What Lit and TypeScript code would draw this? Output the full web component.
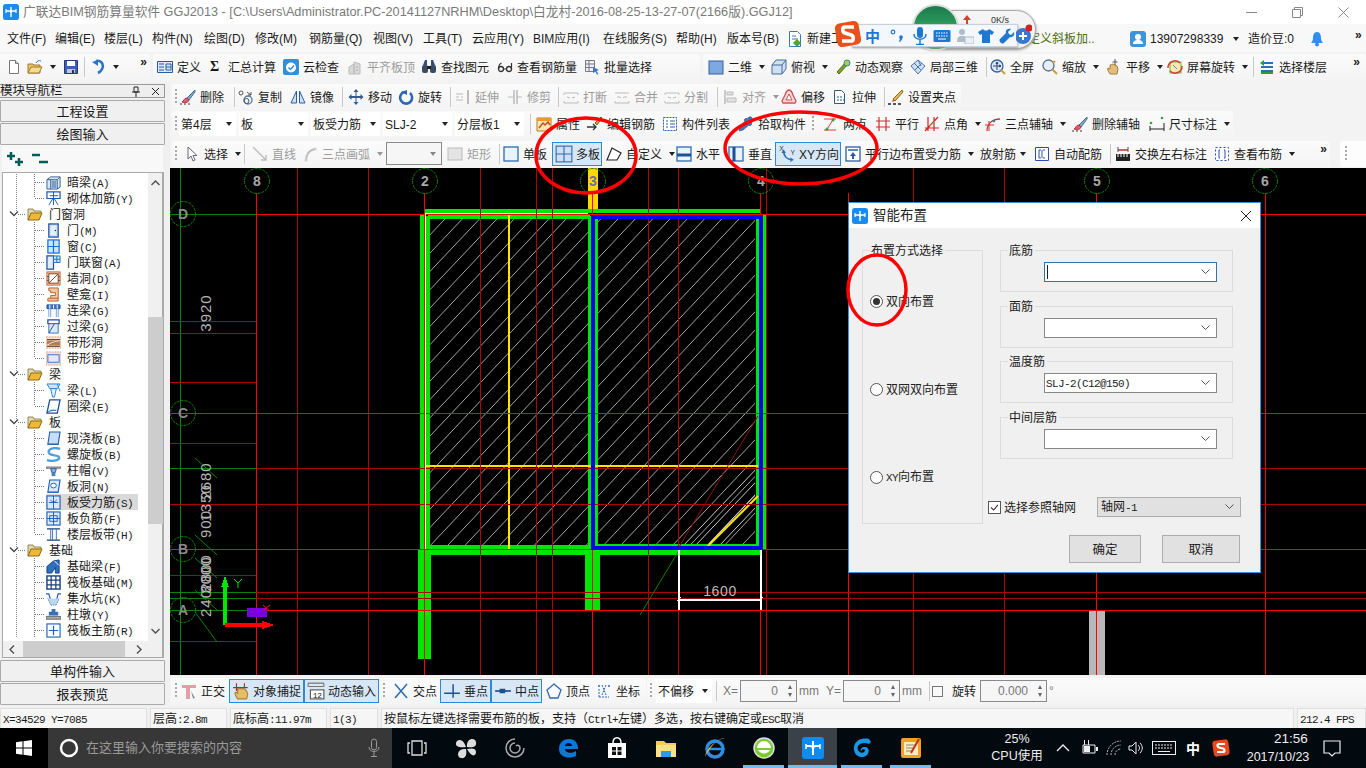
import {LitElement, html, svg, css} from 'lit';
import {customElement} from 'lit/decorators.js';

type Item = {k?: string; ic?: string; t?: string; w: number; f?: string; v?: string};

const it = (ic: string, t: string, w: number, f = ''): Item => ({ic, t, w, f});
const sep = (w: number): Item => ({k: 'sep', w});
const gap = (w: number): Item => ({k: 'gap', w});
const grip = (w = 8): Item => ({k: 'grip', w});
const sel = (t: string, w: number): Item => ({k: 'sel', t, w});
const lbl = (t: string, w: number): Item => ({k: 'lbl', t, w});
const spin = (v: string, w: number): Item => ({k: 'spin', v, w});

const TITLE = '广联达BIM钢筋算量软件 GGJ2013 - [C:\\Users\\Administrator.PC-20141127NRHM\\Desktop\\白龙村-2016-08-25-13-27-07(2166版).GGJ12]';

const MENU: [string, number][] = [['文件(F)', 48], ['编辑(E)', 49], ['楼层(L)', 48], ['构件(N)', 52], ['绘图(D)', 51], ['修改(M)', 54], ['钢筋量(Q)', 64], ['视图(V)', 50], ['工具(T)', 49], ['云应用(Y)', 61], ['BIM应用(I)', 70], ['在线服务(S)', 73], ['帮助(H)', 51], ['版本号(B)', 60]];

const ICONS: Record<string, any> = {
  new: svg`<path d="M3.5 1.5h6l3 3v10h-9z" fill="#fff" stroke="#777"/><path d="M9.5 1.5v3h3" fill="#ddd" stroke="#777"/>`,
  open: svg`<path d="M1 14V5h5l1 1h6v8z" fill="#e8c36a" stroke="#a07c28"/><path d="M1 14l3-6h11l-3 6z" fill="#f5dc94" stroke="#a07c28"/><path d="M9 4c1-2 3-3 5-2" fill="none" stroke="#3a7ac8"/>`,
  save: svg`<path d="M1.5 1.5h13v13h-13z" fill="#3f5fb5" stroke="#223a80"/><path d="M4 2h8v5H4z" fill="#fff"/><path d="M4 10h8v4H4z" fill="#c8c8d4"/><path d="M9 11h2v3H9z" fill="#334"/>`,
  undo: svg`<path d="M6 2C10 1 14 4 12.500 9c-.7 2.300-2.500 4-4.500 5" fill="none" stroke="#2b74c8" stroke-width="2.600"/><path d="M2 3l6-2v6z" fill="#2b74c8"/>`,
  def: svg`<path d="M.5 2.500h15v11H.5z" fill="#dbe7f5" stroke="#2d5a9b"/><path d="M2 5h5M2 8h5M2 11h5M9 5h5v6H9zM9 8h5" fill="none" stroke="#2d5a9b"/>`,
  cloud: svg`<rect x="0" y="0" width="16" height="16" rx="2" fill="#2f8fdc"/><circle cx="8" cy="8.500" r="5" fill="#fff"/><path d="M5.500 8.500l2 2 3.500-4" fill="none" stroke="#2f8fdc" stroke-width="1.500"/>`,
  flat: svg`<path d="M2 15V8l5-3v10zM7 15V3l6 2v10z" fill="#d9d9d9" stroke="#bbb"/><path d="M9 8h2M9 11h2" stroke="#aaa"/>`,
  find: svg`<path d="M2 6l2-5h2v5zM14 6l-2-5h-2v5z" fill="#30507a"/><rect x="1" y="6" width="6" height="8" rx="2" fill="#3a4a60"/><rect x="9" y="6" width="6" height="8" rx="2" fill="#3a4a60"/><path d="M6 7h4v3H6z" fill="#222"/>`,
  see: svg`<circle cx="4" cy="10" r="2.500" fill="none" stroke="#333" stroke-width="1.300"/><circle cx="12" cy="10" r="2.500" fill="none" stroke="#333" stroke-width="1.300"/><path d="M6.500 10h3M1.500 10c0-3 1-5 3-6M14.500 10V4" fill="none" stroke="#333" stroke-width="1.200"/>`,
  batch: svg`<path d="M1.500 1.500h9v11h-9zM1.500 5h9M1.500 8.500h9M5 1.500v11" fill="#eef1f6" stroke="#778"/><path d="M9 8l6 3-2.500 1 2 3-1.500.7-1.500-3L9 14z" fill="#3a78c8"/>`,
  d2: svg`<rect x="1" y="2" width="14" height="13" fill="#7ea8e0" stroke="#35609f"/>`,
  top: svg`<path d="M1 6l4-5h10v9l-4 5H1z" fill="#cfe0f2" stroke="#456a96"/><path d="M1 6h10v9M11 6l4-5" fill="none" stroke="#456a96"/>`,
  orbit: svg`<path d="M2 15l9-10 2 2-9 10z" fill="#7aa32a" stroke="#4c6c12" transform="translate(0 -2)"/><circle cx="12" cy="4" r="3" fill="#a7cf4a" stroke="#3f7fb7"/>`,
  part: svg`<path d="M8 1l7 6-7 8-7-8z" fill="#cfe0f2" stroke="#4a76ac"/><path d="M4 4l7 7M8 1l3 6M12 4L5 11" stroke="#4a76ac" fill="none"/>`,
  full: svg`<circle cx="7" cy="7" r="6" fill="#dbe7f7" stroke="#3a5f9c" stroke-width="1.300"/><path d="M7 3v8M3 7h8M7 3L6 4.500h2zM11 7l-1.500-1v2z" stroke="#27497f" fill="#27497f"/><path d="M11 11l4 4" stroke="#c8a040" stroke-width="2"/>`,
  zoomi: svg`<circle cx="6.500" cy="6.500" r="5.500" fill="#e8eef6" stroke="#5a6f8c" stroke-width="1.300"/><path d="M13 2l-2 2M10.500 10.500l4.500 4.500" stroke="#c8a040" stroke-width="2"/>`,
  pan: svg`<path d="M4 15c-2-3-3-5-2-6l2 1V6l1.500-.5L6 5l1.500.5L9 6l2 1 1 3-1 5z" fill="#e2bd7d" stroke="#a8803c"/><path d="M9 0v6M6.500 3h5" stroke="#556" />`,
  srot: svg`<rect x="3" y="3" width="11" height="11" fill="#ffe9a8" stroke="#6bb04a"/><path d="M1 9a7 7 0 0 1 12-5M15 7a7 7 0 0 1-12 5" fill="none" stroke="#d83a3a" stroke-width="1.500"/><path d="M6 6l4 4" stroke="#3a9ad8"/>`,
  floors: svg`<path d="M2 4h12M2 8h12M2 12h12" stroke="#2d6fb3" stroke-width="2"/><path d="M2 14h12" stroke="#2f9a3f" stroke-width="2"/><path d="M5 1L1 4l4 3z" fill="#2f9a3f"/>`,
  brush: svg`<path d="M15 1L7 9l2 2 6-8z" fill="#7ea8d0" stroke="#47708f"/><path d="M7 9c-3 0-3 3-5 4 3 1 6 1 7-2z" fill="#e05a7a" stroke="#a33"/><path d="M0 15h2M4 15h2M8 15h2" stroke="#333"/>`,
  copy: svg`<path d="M1 4a2 2 0 1 0 4 0 2 2 0 1 0-4 0z" fill="#fff" stroke="#555"/><circle cx="10" cy="11" r="4" fill="none" stroke="#4a78a8" stroke-width="1.300"/><circle cx="8.500" cy="12" r="2.500" fill="none" stroke="#555"/><path d="M9 3l4 3M13 3v3h-3" fill="none" stroke="#555"/>`,
  mirror: svg`<path d="M6.500 2L1 14h5.500zM9.500 2L15 14H9.500z" fill="#cfe0f2" stroke="#2d5f9f"/>`,
  move: svg`<path d="M8 0l2.500 3h-2v4h4V5L15.500 8 12.500 11V9h-4v4h2L8 16l-2.500-3h2V9h-4v2L.5 8 3.500 5v2h4V3h-2z" fill="#2f5a94"/>`,
  rot: svg`<path d="M6 3a6 6 0 1 0 6 1" fill="none" stroke="#2a66b8" stroke-width="2.600"/><path d="M3 3l6-2v5z" fill="#2a66b8"/>`,
  ext: svg`<path d="M1 5h7M1 11h7M1 8h3M6 8h2" stroke="#bbb"/><path d="M13 1v14" stroke="#bbb" stroke-width="2"/>`,
  trim: svg`<path d="M1 8h5M10 8h5" stroke="#bbb"/><path d="M7 1v14M10 1v14" stroke="#bbb" stroke-width="1.500"/>`,
  brk: svg`<path d="M1 4h14M1 14h14M1 4v2M15 4v2M1 12v2M15 12v2" stroke="#bbb"/><path d="M4 8l3 1M12 8l-3 1" stroke="#bbb"/>`,
  mrg: svg`<path d="M1 4h14M1 14h14M1 12v2M15 12v2" stroke="#bbb"/><path d="M3 8h3l1 1M13 8h-3L9 9" fill="none" stroke="#bbb"/>`,
  align: svg`<path d="M3 1v14" stroke="#bbb" stroke-width="1.500"/><path d="M5 3h6v3H5zM5 9h9v4H5z" fill="#e2e2e2" stroke="#bbb"/>`,
  offs: svg`<path d="M8 1c2 0 3 2 4 5l3 6-1 2H2l-1-2 3-6c1-3 2-5 4-5z" fill="#f8d8d8" stroke="#d05050" stroke-width="1.300"/><path d="M8 5l3 6H5z" fill="#fff" stroke="#d05050"/>`,
  stretch: svg`<path d="M2.500 1.500h7l3 3v10h-10z" fill="#fff" stroke="#2d5a80"/><path d="M5 8h5M5 11h7" stroke="#2d5a80" stroke-dasharray="2 1"/>`,
  gpt: svg`<path d="M14 1L5 10l2 2 8-9z" fill="#e8b850" stroke="#8a6a20"/><path d="M0 15h3M5 15h3M10 15h3" stroke="#222" stroke-width="1.500"/><path d="M5 10l-1 3 3-1z" fill="#d05050"/>`,
  attr: svg`<path d="M1 2h14v13H1z" fill="#fbe6b8" stroke="#b87a20"/><path d="M3 12l4-5 2 2 3-3 2 3" fill="none" stroke="#c0501a" stroke-width="1.500"/><path d="M1 2h14v3H1z" fill="#e89a30"/>`,
  edit: svg`<path d="M14 1L8 7l2 2 5-7z" fill="#d8a040" stroke="#806020"/><path d="M0 11h9M6 8l3 3-3 3" fill="none" stroke="#333" stroke-width="1.300"/>`,
  list: svg`<path d="M1.500 1.500h13v13h-13z" fill="#fff" stroke="#2d5f9f" stroke-dasharray="2 1"/><path d="M4 5h2M8 5h5M4 8h2M8 8h5M4 11h2M8 11h5" stroke="#2d5f9f"/>`,
  pick: svg`<path d="M14 2c-1-2-3-1-4 0L9 3 8 2 6 4l1 1-5 6-1 4 4-1 6-5 1 1 2-2-1-1 1-1c1-1 1-2 0-4z" fill="#3f78c0" stroke="#234e8a" stroke-width=".6"/>`,
  twop: svg`<path d="M1 3h12M1 14h12M11 2L3 15" stroke="#d84040" fill="none"/><circle cx="10" cy="4" r="1.500" fill="#3aa03a"/><circle cx="4" cy="13" r="1.500" fill="#3aa03a"/>`,
  para: svg`<path d="M4 1v14M11 1v14M1 5h14M1 11h14" stroke="#d03030" stroke-width="1.200" fill="none"/>`,
  angle: svg`<path d="M4 1v14M10 1v14M1 12h14M1 15L14 1" stroke="#d82020" stroke-width="1.200" fill="none"/><path d="M6 10l5-5" stroke="#2d6" />`,
  arc3: svg`<path d="M2 15C2 8 7 3 15 3" fill="none" stroke="#d03030" stroke-width="1.300"/><path d="M0 9h9M4 5v10" stroke="#d03030"/><circle cx="9" cy="5" r="1.300" fill="#38a"/>`,
  dim: svg`<circle cx="13" cy="2" r="1.300" fill="#3aa03a"/><circle cx="2" cy="7" r="1.300" fill="#3aa03a"/><path d="M1 10v5M15 7v8M1 13h14" stroke="#222" fill="none"/>`,
  arrow: svg`<path d="M4 1v12l3-3 2 5 2-1-2-4.500h4z" fill="#fff" stroke="#667"/>`,
  line: svg`<path d="M1 1l13 13M14 9v5H9" fill="none" stroke="#bbb" stroke-width="1.300"/>`,
  arc: svg`<path d="M4 15C4 8 8 4 13 3" fill="none" stroke="#bbb" stroke-width="2"/><circle cx="13" cy="3" r="1.500" fill="#ccc"/><circle cx="4" cy="14" r="1.500" fill="#ccc"/>`,
  rect: svg`<rect x="1" y="2" width="14" height="12" fill="#e4e4e4" stroke="#bbb"/>`,
  single: svg`<rect x="1" y="1" width="14" height="14" fill="#eaf2fb" stroke="#2d6bb3" stroke-width="1.300"/>`,
  multi: svg`<rect x="1" y="1" width="14" height="14" fill="#cfe0f2" stroke="#2d6bb3" stroke-width="1"/><path d="M8 1v14M1 8h14" stroke="#2d6bb3"/>`,
  custom: svg`<path d="M1 14L6 2l9 5-4 7z" fill="#fff" stroke="#222" stroke-width="1.200"/>`,
  horz: svg`<rect x="1" y="1" width="14" height="14" fill="#eaf2fb" stroke="#2d6bb3" stroke-width="1.300"/><path d="M1 9h14" stroke="#1d4f93" stroke-width="3"/>`,
  vert: svg`<rect x="1" y="1" width="14" height="14" fill="#eaf2fb" stroke="#2d6bb3" stroke-width="1.300"/><path d="M6 1v14" stroke="#1d4f93" stroke-width="3"/>`,
  xy: svg`<path d="M5 5c0 5 3 8 8 8" fill="none" stroke="#2d6bb3" stroke-width="1.500"/><path d="M5 4L3 7h4zM14 13l-3-2v4z" fill="#2d6bb3"/><text x="1" y="5" font-size="6" font-family="Liberation Sans" fill="#333">X</text><text x="11" y="9" font-size="6" font-family="Liberation Sans" fill="#333">Y</text>`,
  edge: svg`<rect x="1" y="1" width="14" height="14" fill="#fff" stroke="#2d5f9f" stroke-width="1.300"/><path d="M3 4h10" stroke="#2d5f9f" stroke-width="1.500"/><path d="M8 6l3 4H9v3H7v-3H5z" fill="#2d5f9f"/>`,
  auto: svg`<path d="M1.500 1.500h13v13h-13z" fill="#fff" stroke="#2d4fa5" stroke-width="1"/><path d="M7 4H5v8h2M9 4h2M9 12h2M8 4v8" fill="none" stroke="#2d4fa5"/>`,
  swap: svg`<path d="M1 8h14v7H1z" fill="#222"/><path d="M3 8v3M6 8v3M9 8v3M12 8v3" stroke="#fff"/><path d="M3 4h10" stroke="#c03030" stroke-width="1.500"/><path d="M3 1v5M13 1v5" stroke="#555"/>`,
  view: svg`<path d="M1.500 1.500h13v13h-13z" fill="#fff" stroke="#2d4fa5" stroke-dasharray="2 2"/><path d="M6 4H5v8h1M10 4h1v8h-1" fill="none" stroke="#2d4fa5"/>`,
  ortho: svg`<path d="M1 2h14v3H9v11H5V5H1z" fill="#e2a0a4"/><path d="M10 8l4 7-2 .5z" fill="#889"/>`,
  snap: svg`<path d="M5 15c-2-3-3-5-2-6l2 1V6h6l2 2 1 3-1 4z" fill="#e4c060" stroke="#a8803c"/><path d="M4 1v7M11 1v4M1 5h13" stroke="#a03030"/>`,
  dyn: svg`<path d="M1 1h14M1 4h14M1 1v3M15 1v3" stroke="#777"/><rect x="3" y="7" width="12" height="8" fill="#fff" stroke="#555"/><text x="5" y="14" font-size="7" font-family="Liberation Mono" fill="#222">12</text>`,
  cross: svg`<path d="M2 1l12 14M14 1L2 15" stroke="#2d6bb3" stroke-width="1.500"/>`,
  perp: svg`<path d="M1 10h14" stroke="#1d4f93" stroke-width="1.300"/><path d="M9 2v12" stroke="#1d4f93" stroke-width="1.300"/>`,
  mid: svg`<path d="M1 8h14" stroke="#1d4f93" stroke-width="1.500"/><rect x="5" y="6" width="5" height="4" fill="#1d4f93"/>`,
  vertex: svg`<path d="M8 1l7 6-3 8H4L1 7z" fill="#f8fbff" stroke="#2d6bb3" stroke-width="1.300"/>`,
  coord: svg`<path d="M3 14V6M3 14h10M6 2l4 10M10 2L6 12" fill="none" stroke="#2d6bb3" stroke-dasharray="2 1"/><circle cx="3" cy="3" r="1" fill="#2d6bb3"/><circle cx="13" cy="3" r="1" fill="#2d6bb3"/>`,
  doc: svg`<path d="M2.500 .5h8l3 3v12h-11z" fill="#fff" stroke="#3a78b8"/><path d="M5 8h6M5 5h4" stroke="#3a78b8"/><path d="M10 8l4 4-4 4-4-4z" fill="#5aa02a"/>`,
  user: svg`<rect width="16" height="16" rx="3" fill="#3f93d8"/><circle cx="8" cy="6" r="3" fill="#fff"/><path d="M3 13c0-3 2-4 5-4s5 1 5 4z" fill="#fff"/>`,
  bell: svg`<path d="M8 1c3 0 4 3 4 6 0 2 1 4 2 5H2c1-1 2-3 2-5 0-3 1-6 4-6z" fill="#2f8ef0"/><circle cx="8" cy="13.500" r="2" fill="#2f8ef0"/>`,
  // tree icons
  tbeam: svg`<path d="M1 5l4-3h10v11l-3 2H1z" fill="#dde8f4" stroke="#35608f"/><path d="M1 5h11v10M12 5l3-3M5 5v10" fill="none" stroke="#35608f"/><path d="M6 6h5v8H6z" fill="#7f9cc0"/>`,
  tmas: svg`<path d="M1 1h14v7H1z" fill="#fff" stroke="#1d58b8" stroke-width="1.300"/><path d="M4 5h9M8 1v14M3 15l5-8 5 8" fill="none" stroke="#1d58b8"/>`,
  tdoor: svg`<rect x="3" y="1" width="10" height="14" fill="#c8daf0" stroke="#1d4f9f" stroke-width="1.300"/><path d="M5 3h6v10H5z" fill="#e6f0fa"/><circle cx="10" cy="8" r=".8" fill="#133"/>`,
  twin: svg`<rect x="2" y="1" width="12" height="14" fill="#cfe2f6" stroke="#1d6fc8" stroke-width="1.300"/><path d="M8 1v14M2 8h12" stroke="#1d6fc8" stroke-width="1.300"/>`,
  tdw: svg`<path d="M1 1h7v14H1z" fill="#e2edf8" stroke="#1d4f9f" stroke-width="1.300"/><path d="M8 1h7v7H8zM11.500 1v7M8 4.500h7" fill="#cfe2f6" stroke="#1d6fc8"/>`,
  thole: svg`<rect x="1" y="1" width="14" height="14" fill="#f8d8c0" stroke="#b85a28"/><rect x="3" y="3" width="10" height="10" fill="#fff" stroke="#704020"/><path d="M3 13L13 3M1 6h2M1 10h2M13 6h2M13 10h2" stroke="#704020"/>`,
  tniche: svg`<path d="M3 1h10v14H2v-3h3V9h5V6H5V4H3z" fill="#f4c8a0" stroke="#b85a28"/><path d="M5 12h8" stroke="#b85a28"/>`,
  tlink: svg`<path d="M1 2h14v4H1z" fill="#3f78c8" stroke="#1d4f9f"/><path d="M4 2v4M8 2v4M12 2v4" stroke="#fff"/><path d="M3 6v9M13 6v9M5 6v9M11 6v9" stroke="#6fa0e0"/>`,
  tover: svg`<path d="M2 1h12v4H2z" fill="#fff" stroke="#1d4f9f" stroke-width="1.300"/><path d="M3 5h10v10H3z" fill="#dbe8f6" stroke="#3a70b8"/><path d="M3 15L9 5" stroke="#1d4f9f"/>`,
  tband: svg`<rect x="0" y="2" width="16" height="12" fill="#f8e0d0" stroke="#e0a080" stroke-dasharray="2 1"/><path d="M1 6h14v5H1z" fill="#b88050"/><path d="M1 11C6 8 10 7 15 6" stroke="#fff"/><path d="M1 5h14M1 12h14" stroke="#402010"/>`,
  twinb: svg`<rect x="0" y="1" width="16" height="14" fill="#f8e0d0" stroke="#e0a080" stroke-dasharray="2 1"/><rect x="2" y="4" width="12" height="8" fill="#dfeaf8" stroke="#3a70c0"/>`,
  tfun: svg`<path d="M1 1h14l-3 5H4z" fill="#cfe4f8" stroke="#2a80c8"/><path d="M5 6h6l-2 9H7z" fill="#e8f2fc" stroke="#2a80c8"/><path d="M12 1l3 8" stroke="#2a80c8"/>`,
  tring: svg`<path d="M4 1h11l-3 14H1z" fill="#fff" stroke="#1d4f9f" stroke-width="1.400"/><path d="M1 15l4-3h6" stroke="#1d4f9f" fill="#bcd"/>`,
  tslab: svg`<path d="M4 1h11l-2 13H2z" fill="#c8dcf4" stroke="#1d5fb0" stroke-width="1.200"/><path d="M2 14h11v1H1z" fill="#1d5fb0"/>`,
  tspiral: svg`<path d="M15 2C8 0 2 2 3 6s10 2 11 5-6 5-13 3" fill="none" stroke="#4fa0e0" stroke-width="2.500"/>`,
  tcap: svg`<path d="M0 4h16v2H0z" fill="#999" stroke="#666" stroke-width=".5"/><path d="M5 6h6l-1 4H6z" fill="#8ab0d8" stroke="#2d5f9f"/><path d="M6 10h4v4H6z" fill="#4a80c0"/>`,
  tsh: svg`<path d="M4 1h11l-2 13H2z" fill="#dbe8f8" stroke="#1d5fb0" stroke-width="1.200"/><ellipse cx="8" cy="7" rx="3" ry="2.500" fill="#fff" stroke="#1d5fb0"/><path d="M2 14h11v1H1z" fill="#1d5fb0"/>`,
  treb: svg`<rect x="1" y="1" width="14" height="14" fill="#dbe8f8" stroke="#1d5fb0" stroke-width="1.200"/><path d="M8 1v14M3 8h10M5 5c0 3 6 3 6 0" fill="none" stroke="#1d5fb0"/>`,
  tneg: svg`<rect x="1" y="1" width="14" height="14" fill="#dbe8f8" stroke="#1d5fb0" stroke-width="1.200"/><path d="M8 1v14M1 8h14M4 5h8v6H4z" fill="none" stroke="#1d5fb0"/>`,
  tfb: svg`<path d="M1 2h14M1 14h14" stroke="#1d3f80" stroke-width="1.500"/><path d="M5 2v12M11 2v12M7 2v12" stroke="#3a70b8"/>`,
  tfnd: svg`<path d="M1 15V8L8 2l6-1v14H10V9L6 15z" fill="#2f6fc0" stroke="#163f80"/><path d="M9 2l5 5" stroke="#fff"/>`,
  traft: svg`<rect x="1" y="1" width="14" height="14" fill="#fff" stroke="#1d3f80" stroke-width="1.500"/><path d="M1 5.500h14M1 10.500h14M5.500 1v14M10.500 1v14" stroke="#1d3f80" stroke-width="1.300"/>`,
  tpit: svg`<path d="M0 3h3l2 7h6l2-7h3" fill="none" stroke="#1d5fb0" stroke-width="1.300"/><path d="M2 8l3 7h6l3-7" fill="#bcd8f0" stroke-dasharray="1 1" stroke="#2d6fb0"/>`,
  tpier: svg`<path d="M6 2h4v3h3v4H3V5h3z" fill="#3a70b8"/><path d="M0 10h16v3H0z" fill="#aaa" stroke="#666"/>`,
  tmain: svg`<rect x="1" y="1" width="14" height="14" fill="#fff" stroke="#1d5fb0" stroke-width="1.200"/><path d="M8 3v10M3 8h10" stroke="#1d5fb0" stroke-width="1.300"/>`,
  tfold: svg`<path d="M1 14V3h5l1 2h7v2" fill="#e4d8a8" stroke="#8a8a60"/><path d="M1 14l3-7h11l-3 7z" fill="#f0b838" stroke="#8a6a10"/>`,
};

const TB1A: Item[] = [gap(6), it('new', '', 21), it('open', '', 36, 'v'), it('save', '', 18), sep(7), gap(2), it('undo', '', 32, 'v')];
const TB1B: Item[] = [it('def', '定义', 53), {k: 'sigma', w: 18}, {k: 'lbl', t: '汇总计算', w: 55}, it('cloud', '云检查', 64), it('flat', '平齐板顶', 74, 'd'), it('find', '查找图元', 76), it('see', '查看钢筋量', 87), it('batch', '批量选择', 70)];
const TB1C: Item[] = [gap(5), it('d2', '二维', 63, 'v'), it('top', '俯视', 64, 'v'), it('orbit', '动态观察', 75), it('part', '局部三维', 72), sep(8), it('full', '全屏', 52), it('zoomi', '缩放', 64, 'v'), it('pan', '平移', 61, 'v'), it('srot', '屏幕旋转', 80, 'v'), sep(12), it('floors', '选择楼层', 70)];
const TB2: Item[] = [grip(), it('brush', '删除', 50), sep(8), it('copy', '复制', 52), it('mirror', '镜像', 47), sep(11), it('move', '移动', 50), it('rot', '旋转', 47), sep(10), it('ext', '延伸', 52, 'd'), it('trim', '修剪', 46, 'd'), sep(10), it('brk', '打断', 51, 'd'), it('mrg', '合并', 50, 'd'), it('brk', '分割', 49, 'd'), sep(9), it('align', '对齐', 59, 'dv'), it('offs', '偏移', 51), it('stretch', '拉伸', 48), sep(8), it('gpt', '设置夹点', 70)];
const TB3A: Item[] = [grip(7), sel('第4层', 57), gap(3), sel('板', 69), gap(3), sel('板受力筋', 69), gap(3), sel('SLJ-2', 69), gap(3), sel('分层板1', 69), sep(12), it('attr', '属性', 51), it('edit', '编辑钢筋', 75), it('list', '构件列表', 76), it('pick', '拾取构件', 66)];
const TB3B: Item[] = [grip(), gap(6), it('twop', '两点', 52), it('para', '平行', 49), it('angle', '点角', 61, 'v'), it('arc3', '三点辅轴', 87, 'v'), it('brush', '删除辅轴', 77), it('dim', '尺寸标注', 84, 'v')];
const TB4: Item[] = [grip(), gap(4), it('arrow', '选择', 56, 'v'), sep(8), gap(4), it('line', '直线', 50, 'd'), it('arc', '三点画弧', 84, 'dv'), {k: 'combo', w: 56}, gap(5), it('rect', '矩形', 48, 'd'), sep(8), it('single', '单板', 49), it('multi', '多板', 50, 'a'), gap(4), it('custom', '自定义', 70, 'v'), it('horz', '水平', 52), it('vert', '垂直', 47), it('xy', 'XY方向', 66, 'a'), gap(4), it('edge', '平行边布置受力筋', 135, 'v'), {k: 'lblv', t: '放射筋', w: 54}, it('auto', '自动配筋', 72), sep(9), it('swap', '交换左右标注', 99), it('view', '查看布筋', 80, 'v')];
const TB5A: Item[] = [grip(9), gap(1), it('ortho', '正交', 48), it('snap', '对象捕捉', 75, 'a'), it('dyn', '动态输入', 75, 'a')];
const TB5B: Item[] = [grip(9), gap(5), it('cross', '交点', 47), it('perp', '垂点', 51, 'a'), it('mid', '中点', 51, 'a'), gap(4), it('vertex', '顶点', 50), it('coord', '坐标', 48)];
const TB5C: Item[] = [grip(8), gap(1), sel('不偏移', 56), sep(9), {k: 'gray', t: 'X=', w: 19}, spin('0', 57), {k: 'gray', t: 'mm', w: 27}, {k: 'gray', t: 'Y=', w: 19}, spin('0', 57), {k: 'gray', t: 'mm', w: 26}, sep(6), {k: 'chk', w: 20}, lbl('旋转', 28), spin('0.000', 67), {k: 'gray', t: '°', w: 10}];

type Row = {t: string; ic?: string; last?: boolean; sel?: boolean};
const TREE: Row[] = [
  {t: '暗梁(A)', ic: 'tbeam'}, {t: '砌体加筋(Y)', ic: 'tmas', last: true},
  {t: '门窗洞'},
  {t: '门(M)', ic: 'tdoor'}, {t: '窗(C)', ic: 'twin'}, {t: '门联窗(A)', ic: 'tdw'}, {t: '墙洞(D)', ic: 'thole'}, {t: '壁龛(I)', ic: 'tniche'}, {t: '连梁(G)', ic: 'tlink'}, {t: '过梁(G)', ic: 'tover'}, {t: '带形洞', ic: 'tband'}, {t: '带形窗', ic: 'twinb', last: true},
  {t: '梁'},
  {t: '梁(L)', ic: 'tfun'}, {t: '圈梁(E)', ic: 'tring', last: true},
  {t: '板'},
  {t: '现浇板(B)', ic: 'tslab'}, {t: '螺旋板(B)', ic: 'tspiral'}, {t: '柱帽(V)', ic: 'tcap'}, {t: '板洞(N)', ic: 'tsh'}, {t: '板受力筋(S)', ic: 'treb', sel: true}, {t: '板负筋(F)', ic: 'tneg'}, {t: '楼层板带(H)', ic: 'tfb', last: true},
  {t: '基础'},
  {t: '基础梁(F)', ic: 'tfnd'}, {t: '筏板基础(M)', ic: 'traft'}, {t: '集水坑(K)', ic: 'tpit'}, {t: '柱墩(Y)', ic: 'tpier'}, {t: '筏板主筋(R)', ic: 'tmain'},
];

const VERT: [number, number][] = [[256, 1], [297, 0], [368, 0], [424, 1], [480, 0], [536, 0], [552, 0], [592, 1], [648, 0], [678, 0], [760, 1], [766, 0], [848, 1], [913, 0], [1004, 0], [1096, 1], [1265, 1]];
// y, colour left of the 8 axis, colour right of it
const HORZ: [number, string, string][] = [[214, 'g', 'b'], [321, 'd', ''], [333, 'd', ''], [382, 'd', ''], [413, 'g', 'b'], [443, 'd', ''], [468, 'g', 'd'], [504, 'd', 'd'], [549, 'g', 'b'], [575, 'd', ''], [592, 'g', 'd'], [598, 'g', 'd'], [610, 'g', 'b'], [641, 'd', '']];
const COL: Record<string, string> = {g: '#0b800b', b: '#f00', d: '#a80808'};
const G = '#00e600';

const mix = (s: string) => s.split(/([\x20-\x7e]+)/).map((p, i) => (i % 2 ? html`<span class="lat">${p}</span>` : p));
const icon = (k: string, s = 16) => html`<svg class="ic" width=${s} height=${s} viewBox="0 0 16 16">${ICONS[k]}</svg>`;
const caret = html`<svg class="chev" width="9" height="6" viewBox="0 0 9 6"><path d="M.5 .5l4 4 4-4" fill="none" stroke="#555"/></svg>`;
const APP = svg`<rect width="16" height="16" rx="2.500" fill="#1a8cf0"/><path d="M8 3v10M3 7h3c1 0 2 .7 2 2M13 7h-3c-1 0-2 .7-2 2" fill="none" stroke="#fff" stroke-width="1.400"/><path d="M3 5v4M13 5v4" stroke="#fff" stroke-width="1.200"/>`;

@customElement('app-root')
export class AppRoot extends LitElement {
  static styles = css`
    :host {
      display: block;
      position: relative;
      width: 1366px;
      height: 768px;
      overflow: hidden;
      background: #f0f0f0;
      font: 12px/16px "Liberation Sans", "Noto Sans CJK SC", sans-serif;
      color: #1a1a1a;
    }
    svg { display: block; flex: none; }
    .lat { font: 11px/16px "Liberation Mono", monospace; letter-spacing: -.6px; }

    .title { height: 24px; background: #fff; display: flex; align-items: center; padding-left: 3px; color: #7a7a7a; font-size: 12.730px; }
    .title .name { margin-left: 4px; white-space: nowrap; flex: 1; }
    .winbtn { width: 46px; height: 22px; display: flex; align-items: center; justify-content: center; }

    .menu { height: 28px; background: #f8f8f8; display: flex; align-items: center; padding-left: 7px; white-space: nowrap; }
    .menu .m { flex: none; display: flex; align-items: center; gap: 4px; padding-top: 1px; box-sizing: border-box; }
    .olive { color: #4d6b10; }
    .more { font: bold 12px/12px "Liberation Sans", sans-serif; align-self: flex-start; margin-top: 5px; }

    .tb1 { height: 30px; padding-top: 2px; box-sizing: border-box; display: flex; background: #f3f3f3; }
    .tbar { display: flex; align-items: center; height: 26px; background: linear-gradient(#fbfbfb, #f4f4f4); border-radius: 3px; white-space: nowrap; flex: none; }
    .it { display: flex; align-items: center; flex: none; box-sizing: border-box; height: 100%; gap: 4px; }
    .it > span:not(.tri) { padding-top: 2px; }
    .it.d { color: #9c9c9c; }
    .it.a { background: #d7e7f6; border: 1px solid #2b8ad8; height: 24px; padding-left: 2px; gap: 3px; }
    .it.a .ic { width: 18px; height: 18px; }
    .tri { width: 0; height: 0; border: 3px solid transparent; border-top: 4px solid #222; border-bottom: 0; margin-left: 3px; flex: none; }
    .it.d .tri { border-top-color: #999; }
    .sepw { flex: none; display: flex; justify-content: center; height: 100%; align-items: center; }
    .sepw i { width: 1px; height: 20px; background: #c8c8c8; }
    .grip { flex: none; display: flex; justify-content: center; align-items: center; height: 100%; }
    .grip i { width: 2px; height: 16px; background: repeating-linear-gradient(#a8a8a8 0 2px, transparent 2px 4px); }
    .sel { flex: none; box-sizing: border-box; height: 24px; background: #fff; display: flex; align-items: center; justify-content: space-between; padding: 0 4px 0 2px; overflow: hidden; }
    .sel span:first-child { padding-top: 2px; }
    .combo { flex: none; box-sizing: border-box; height: 23px; border: 1px solid #8a8a8a; background: #f6f6f6; display: flex; align-items: center; justify-content: flex-end; padding-right: 5px; }
    .spin { flex: none; box-sizing: border-box; height: 22px; border: 1px solid #8a8a8a; background: #f6f6f6; color: #777; display: flex; align-items: center; justify-content: flex-end; }
    .spin b { font-weight: 400; margin-right: 5px; }
    .spin .ud { width: 13px; height: 100%; display: flex; flex-direction: column; justify-content: space-around; align-items: center; padding: 2px 0; box-sizing: border-box; }
    .spin .ud i { width: 0; height: 0; border: 2.500px solid transparent; }
    .spin .ud .u { border-bottom: 4px solid #666; border-top: 0; }
    .spin .ud .n { border-top: 4px solid #666; border-bottom: 0; }
    .gray { color: #777; flex: none; padding-left: 2px; box-sizing: border-box; }
    .chk { flex: none; }
    .chk i { display: block; width: 11px; height: 11px; border: 1px solid #777; box-sizing: border-box; background: #f8f8f8; }

    .main { height: 624px; display: flex; }
    .nav { width: 170px; flex: none; box-sizing: border-box; padding-top: 2px; display: flex; flex-direction: column; }
    .navhead { width: 165px; height: 14px; box-sizing: border-box; border: 1px solid #999; border-width: 1px 1px 1px 0; display: flex; align-items: center; line-height: 12px; font-size: 12.500px; background: #eee; flex: none; }
    .navhead span { flex: 1; }
    .nbtn { width: 165px; height: 22px; box-sizing: border-box; border: 1px solid #aaa; border-radius: 1px; display: flex; align-items: center; justify-content: center; font-size: 13px; flex: none; background: #f0f0f0; padding-top: 2px; }
    .nbtn + .nbtn { margin-top: 1px; }
    .pm { width: 161px; height: 27px; margin-left: 2px; background: #f8f8f8; display: flex; gap: 8px; align-items: center; padding-left: 5px; box-sizing: border-box; flex: none; }
    .treebox { width: 162px; height: 486px; margin-left: 2px; box-sizing: border-box; border: 1px solid #aaa; border-right-width: 2px; background: #f0f0f0; display: flex; flex-direction: column; flex: none; margin-bottom: 2px; }
    .treetop { display: flex; height: 468px; flex: none; }
    .rows { width: 145px; height: 100%; overflow: hidden; background: #fff; flex: none; box-sizing: border-box; padding-top: 1px; }
    .row { height: 16px; position: relative; display: flex; align-items: center; white-space: nowrap; padding-left: 43px; box-sizing: border-box;
      background: repeating-linear-gradient(#888 0 1px, transparent 1px 2px) 13px 0/1px 100% no-repeat; }
    .row::before { content: ""; position: absolute; left: 31px; top: 0; width: 1px; height: 100%; background: repeating-linear-gradient(#777 0 1px, transparent 1px 2px); }
    .row::after { content: ""; position: absolute; left: 32px; top: 8px; width: 10px; height: 1px; background: repeating-linear-gradient(90deg, #777 0 1px, transparent 1px 2px); }
    .row.last::before { height: 8px; }
    .row.p { padding-left: 24px; gap: 4px; z-index: 1; }
    .row.p::before { display: none; }
    .row.p::after { left: 15px; width: 8px; }
    .row span { padding-top: 2px; }
    .row .chv { position: absolute; left: 6px; top: 5px; background: #fff; }
    .row .lab { display: flex; align-items: center; gap: 4px; padding-right: 2px; height: 16px; flex: none; width: 92px; box-sizing: border-box; }
    .row.sel .lab { background: #d9d9d9; }
    .vs { width: 15px; display: flex; flex-direction: column; flex: none; }
    .vs .t1 { height: 124px; flex: none; }
    .vs .th { height: 207px; background: #cdcdcd; flex: none; }
    .ar { display: flex; align-items: center; justify-content: center; flex: none; }
    .hs { height: 16px; display: flex; align-items: center; flex: none; }
    .hs .th { width: 102px; height: 100%; background: #cdcdcd; margin-left: 3px; }
    .hs .ar { width: 17px; }

    .right { flex: 1; display: flex; flex-direction: column; min-width: 0; }
    .rowt { height: 27px; padding-top: 1px; box-sizing: border-box; display: flex; padding-left: 2px; flex: none; align-items: center; background: #f3f3f3; gap: 1px; }
    .rowt.first { height: 28px; padding-top: 2px; }
    .rowt.r4 { height: 31px; padding: 3px 0 1px 2px; }
    .canvas { height: 507px; background: #000; position: relative; flex: none; }
    .rowb { height: 31px; box-sizing: border-box; padding: 3px 0 2px 1px; display: flex; gap: 0; flex: none; background: #f3f3f3; }
    .rowb .tbar { height: 26px; }

    .status { height: 22px; padding-top: 2px; box-sizing: border-box; display: grid; grid-template-columns: 147px 77px 97px 48px 913px 1fr; column-gap: 3px; }
    .status div { background: #f6f6f6; border: 1px solid #e0e0e0; border-bottom: 0; box-sizing: border-box; padding-left: 2px; white-space: nowrap; line-height: 20px; overflow: hidden; }

    .task { height: 40px; background: #020a10; display: flex; color: #fff; align-items: center; position: relative; }
    .start { width: 48px; height: 100%; background: #000; display: flex; align-items: center; justify-content: center; flex: none; }
    .search { width: 344px; height: 100%; background: #373737; flex: none; display: flex; align-items: center; box-sizing: border-box; padding: 0 12px 0 10px; color: #9a9a9a; font-size: 13px; }
    .search span { flex: 1; margin-left: 6px; }
    .tk { width: 49px; height: 100%; flex: none; display: flex; align-items: center; justify-content: center; box-sizing: border-box; position: relative; }
    .tk.run::after { content: ""; position: absolute; left: 4px; right: 4px; bottom: 0; height: 3px; background: #76b9ed; }
    .tk.cur::after { left: 0; right: 0; }
    .tk.cur { background: #3a4148; }
    .tray { flex: none; display: flex; align-items: center; justify-content: center; height: 100%; }
    .cpu { width: 64px; margin-left: 50px; flex-direction: column; font-size: 12.500px; line-height: 17px; color: #eee; }
    .clock { width: 82px; flex-direction: column; line-height: 18px; font-size: 12.500px; text-align: center; color: #eee; }
    .clock span:first-child { margin-left: 26px; font-size: 13.500px; }

    /* dialog floats over the drawing */
    .dlg { position: absolute; left: 678px; top: 34px; width: 413px; height: 371px; box-sizing: border-box; border: 1px solid #3b8fdc; background: #f0f0f0; display: flex; flex-direction: column; color: #222; }
    .dlghead { height: 25px; background: #fff; display: flex; align-items: center; padding-left: 3px; gap: 5px; font-size: 13.500px; flex: none; }
    .dlghead span { flex: 1; }
    .dlghead .x { margin-right: 8px; }
    .dlgbody { position: relative; flex: 1; display: flex; padding: 22px 0 0 13px; align-items: flex-start; }
    .grp { border: 1px solid #dcdcdc; box-sizing: border-box; position: relative; }
    .grp > em { position: absolute; left: 7px; top: -8px; font-style: normal; background: #f0f0f0; padding: 0 2px 0 1px; line-height: 16px; font-size: 12px; }
    .gl { width: 121px; height: 274px; padding: 40px 0 0 7px; display: flex; flex-direction: column; gap: 68px; flex: none; }
    .radio { display: flex; align-items: center; height: 20px; gap: 3px; }
    .radio span { padding-top: 1px; }
    .radio i { width: 13px; height: 13px; border-radius: 50%; border: 1px solid #555; box-sizing: border-box; background: #fff; display: flex; align-items: center; justify-content: center; flex: none; }
    .radio i b { width: 7px; height: 7px; border-radius: 50%; background: #333; }
    .gr { display: flex; flex-direction: column; gap: 13.500px; margin-left: 17px; flex: none; }
    .gr .grp { width: 233px; height: 42px; padding: 11px 0 0 43px; }
    .cb { width: 173px; height: 20px; box-sizing: border-box; border: 1px solid #888; background: #fff; display: flex; align-items: center; justify-content: space-between; padding: 0 6px 0 1px; }
    .cb.focus { border-color: #2f72b0; }
    .cursor { width: 1px; height: 14px; background: #222; margin-left: 1px; }
    .refrow { position: absolute; left: 139px; top: 269px; display: flex; align-items: center; }
    .ck { width: 13px; height: 13px; box-sizing: border-box; border: 1px solid #555; background: #fff; margin-right: 3px; flex: none; }
    .refrow > span, .refcb > span { padding-top: 1px; }
    .refcb { width: 144px; height: 20px; margin-left: 21px; background: #e1e1e1; border: 1px solid #adadad; box-sizing: border-box; display: flex; align-items: center; justify-content: space-between; padding: 0 6px 0 3px; }
    .btns { position: absolute; left: 220px; top: 307px; display: flex; gap: 21px; }
    .bt { height: 28px; background: #e1e1e1; border: 1px solid #adadad; box-sizing: border-box; display: flex; align-items: center; justify-content: center; font-size: 12.500px; padding-top: 1px; }

    /* floating IME and network widget */
    .widget { position: absolute; left: 913px; top: 10px; width: 123px; height: 39px; border-radius: 20px; background: #f4f4f4; border: 1px solid #aaa; box-shadow: 0 1px 3px #888; box-sizing: border-box; }
    .ball { position: absolute; left: 912px; top: 4px; width: 47px; height: 47px; border-radius: 50%; background: linear-gradient(#1d7a4c, #2aa05c 50%, #2fa845); border: 2px solid #ddd; box-sizing: border-box; }
    .speed { position: absolute; left: 991px; top: 13px; font: 9px/14px "Liberation Sans", sans-serif; color: #333; }
    .ime { position: absolute; left: 852px; top: 24px; width: 166px; height: 23px; background: #f4f8fc; border: 1px solid #c8d0da; box-sizing: border-box; box-shadow: 0 1px 2px #999; display: flex; align-items: center; padding-left: 12px; }
    .ime .zh { color: #1f78d0; font: bold 15px/18px "Noto Sans CJK SC", sans-serif; width: 20px; }
    .imeb { flex: none; margin-left: 5px; }
    .s { position: absolute; left: 834px; top: 20px; }
    .plus { position: absolute; left: 1016px; top: 24px; }
    .marks { position: absolute; left: 0; top: 0; pointer-events: none; }
  `;

  private renderItem(i: Item) {
    const w = `width:${i.w}px`;
    switch (i.k) {
      case 'gap': return html`<div style=${w} class="grip"></div>`;
      case 'sep': return html`<div style=${w} class="sepw"><i></i></div>`;
      case 'grip': return html`<div style=${w} class="grip"><i></i></div>`;
      case 'sel': return html`<div style=${w} class="sel"><span>${i.t}</span><span class="tri"></span></div>`;
      case 'lbl': return html`<div style=${w} class="it"><span>${i.t}</span></div>`;
      case 'lblv': return html`<div style=${w} class="it"><span>${i.t}</span><span class="tri" style="margin-left:0"></span></div>`;
      case 'gray': return html`<div style=${w} class="gray">${i.t}</div>`;
      case 'sigma': return html`<div style=${w} class="it"><b style="font:bold 14px 'Liberation Serif',serif">Σ</b></div>`;
      case 'combo': return html`<div style=${w} class="combo"><span class="tri" style="border-top-color:#888"></span></div>`;
      case 'chk': return html`<div style=${w} class="chk"><i></i></div>`;
      case 'spin': return html`<div style=${w} class="spin"><b>${i.v}</b><div class="ud"><i class="u"></i><i class="n"></i></div></div>`;
    }
    const f = i.f || '';
    return html`<div style=${w} class="it ${f.includes('d') ? 'd' : ''} ${f.includes('a') ? 'a' : ''}">
      ${i.ic ? icon(i.ic) : ''}${i.t ? html`<span>${i.t}</span>` : ''}${f.includes('v') ? html`<span class="tri"></span>` : ''}
    </div>`;
  }

  private bar(items: Item[], w: number, tail: any = '') {
    return html`<div class="tbar" style="width:${w}px">${items.map(i => this.renderItem(i))}${tail}</div>`;
  }

  private hatch() {
    const out: any[] = [];
    for (let x = 80; x < 780; x += 17.3) out.push(svg`<line x1=${x} y1="550" x2=${x + 331} y2="200"/>`);
    return out;
  }

  private renderCanvas() {
    const dense = [0, 12, 24, 36].map(d => svg`<line x1=${682 + d} y1="547" x2=${760 + d} y2="465"/>`);
    return html`<svg width="1196" height="507" viewBox="170 168 1196 507" shape-rendering="crispEdges">
      <defs>
        <clipPath id="hl"><rect x="430" y="219" width="158" height="326"/></clipPath>
        <clipPath id="hr"><rect x="598" y="219" width="157" height="327"/></clipPath>
      </defs>
      <!-- yellow stub above axis 3 -->
      <rect x="588" y="168" width="10" height="41" fill="#ffd800"/>
      <!-- columns and beams -->
      <rect x="424" y="209" width="336" height="4" fill=${G}/>
      <rect x="420" y="214" width="5" height="335" fill=${G}/>
      <rect x="762" y="214" width="4" height="335" fill=${G}/>
      <rect x="424" y="213" width="164" height="1" fill="#fff"/>
      <rect x="425" y="550" width="335" height="5" fill=${G}/>
      <rect x="425" y="549" width="160" height="1" fill="#fff"/>
      <rect x="418" y="550" width="13" height="109" fill=${G}/>
      <rect x="585" y="551" width="15" height="59" fill=${G}/>
      <rect x="1089" y="611" width="16" height="64" fill="#b8b8b8"/>
      <!-- slab hatch -->
      <g stroke="#cfcfcf" stroke-width=".8" shape-rendering="auto">
        <g clip-path="url(#hl)">${this.hatch()}</g>
        <g clip-path="url(#hr)">${this.hatch()}</g>
        <g clip-path="url(#hr)" stroke="#fff">${dense}</g>
      </g>
      <!-- slab frames -->
      <path d="M428 216.500h162M428 547h162M428 216v333M590 216v333" fill="none" stroke=${G} stroke-width="4"/>
      <path d="M596.500 218v328M757 218v328" fill="none" stroke=${G} stroke-width="3"/>
      <rect x="595" y="544" width="163" height="2" fill=${G}/>
      <!-- yellow bars -->
      <path d="M508.500 215v334" stroke="#ffe600" stroke-width="2"/>
      <path d="M424 466h334" stroke="#ffe600" stroke-width="2"/>
      <path d="M707 547L758 496" stroke="#ffe600" stroke-width="2" shape-rendering="auto"/>
      <!-- axis grid -->
      <path d="M180.500 168v507" stroke="#0b800b"/>
      ${VERT.map(([x, b]) => svg`<line x1=${x + 0.5} x2=${x + 0.5} y1=${b ? 193 : 168} y2="675" stroke=${b ? '#f00' : COL.d}/>`)}
      ${HORZ.map(([y, l, r]) => svg`
        <line x1="170" x2="256" y1=${y + 0.5} y2=${y + 0.5} stroke=${COL[l]}/>
        ${r ? svg`<line x1="256" x2="1366" y1=${y + 0.5} y2=${y + 0.5} stroke=${COL[r]}/>` : ''}`)}
      <!-- selected slab outline sits on top of the grid -->
      <rect x="593" y="216.500" width="167.500" height="331" fill="none" stroke="#0000f0" stroke-width="4"/>
      <rect x="425" y="214" width="1" height="335" fill="#d8ffd8"/>
      <!-- thin construction lines -->
      <g shape-rendering="auto" fill="none">
        <path d="M679 547L758 416" stroke="#8a1010"/>
        <path d="M678 552L640 615" stroke="#0b800b"/>
        <path d="M195 458l22 20M195 535l22 20M195 558l22 20M195 590l22 20M195 612l22 30" stroke="#0b800b"/>
      </g>
      <!-- axis bubbles -->
      <g fill="none" stroke="#0b800b" stroke-dasharray="3 1" shape-rendering="auto">
        ${[257, 425, 593, 761, 1097, 1265].map(x => svg`<circle cx=${x} cy="181" r="12.500"/>`)}
        ${[214, 413, 549, 610].map(y => svg`<circle cx="183" cy=${y} r="12.500"/>`)}
      </g>
      <g font-family="Liberation Sans" font-weight="700" font-size="14" text-anchor="middle" fill="#a8a8a8" shape-rendering="auto">
        ${[[257, '8'], [425, '2'], [761, '4'], [1097, '5'], [1265, '6']].map(([x, t]) => svg`<text x=${x} y="186">${t}</text>`)}
        <text x="593" y="186" fill="#6a6ac8">3</text>
        ${[[214, 'D'], [413, 'C'], [549, 'B'], [610, 'A']].map(([y, t]) => svg`<text x="183" y=${+y + 5} fill="#8a8a8a">${t}</text>`)}
      </g>
      <!-- dimension texts -->
      <g font-family="Liberation Sans" font-size="15" fill="#b4b4b4" text-anchor="middle" shape-rendering="auto" letter-spacing="1">
        <text transform="translate(211 313) rotate(-90)">3920</text>
        <text transform="translate(211 481) rotate(-90)">2680</text>
        <text transform="translate(211 503) rotate(-90)">1350</text>
        <text transform="translate(211 524) rotate(-90)">900</text>
        <text transform="translate(211 573) rotate(-90)">2800</text>
        <text transform="translate(211 575) rotate(-90)">3000</text>
        <text transform="translate(211 603) rotate(-90)">240</text>
      </g>
      <!-- 1600 dimension -->
      <path d="M679 550v60M761 550v60" stroke="#fff" stroke-width="2"/>
      <path d="M678 600h84" stroke="#fff" stroke-width="2"/>
      <path d="M677 601l4-4M759 601l4-4" stroke="#fff" shape-rendering="auto"/>
      <text x="720" y="596" text-anchor="middle" font-family="Liberation Sans" font-size="14" fill="#bbb" letter-spacing=".6" shape-rendering="auto">1600</text>
      <!-- UCS arrows -->
      <rect x="247" y="608" width="20" height="9" fill="#7a00e0"/>
      <path d="M263 605l7 6M270 605l-7 6" stroke="#f00" shape-rendering="auto"/>
      <rect x="223" y="586" width="4" height="39" fill="#00e600"/>
      <path d="M225 576l4 11h-8z" fill="#00e600"/>
      <rect x="225" y="623" width="38" height="4" fill="#f00"/>
      <path d="M274 625l-12-4v8z" fill="#f00"/>
      <path d="M234 579l4 4 4-4M238 583v5" stroke="#00e600" fill="none" shape-rendering="auto"/>
    </svg>`;
  }

  private renderDialog() {
    const combo = (t: string, v = '', focus = false) => html`<div class="grp"><em>${t}</em>
      <div class="cb ${focus ? 'focus' : ''}">${focus ? html`<span class="cursor"></span>` : html`<span>${mix(v)}</span>`}${caret}</div></div>`;
    return html`<div class="dlg">
      <div class="dlghead">
        <svg width="16" height="16" viewBox="0 0 16 16">${APP}</svg>
        <span>智能布置</span>
        <svg class="x" width="12" height="12" viewBox="0 0 12 12"><path d="M1 1l10 10M11 1L1 11" stroke="#222"/></svg>
      </div>
      <div class="dlgbody">
        <div class="grp gl"><em>布置方式选择</em>
          <div class="radio"><i><b></b></i><span>双向布置</span></div>
          <div class="radio"><i></i><span>双网双向布置</span></div>
          <div class="radio"><i></i><span>${mix('XY')}向布置</span></div>
        </div>
        <div class="gr">
          ${combo('底筋', '', true)}
          ${combo('面筋')}
          ${combo('温度筋', 'SLJ-2(C12@150)')}
          ${combo('中间层筋')}
        </div>
        <div class="refrow">
          <svg class="ck" viewBox="0 0 13 13"><path d="M2.500 6.500l3 3 5-6" fill="none" stroke="#333" stroke-width="1.300"/></svg>
          <span>选择参照轴网</span>
          <div class="refcb"><span>${mix('轴网-1')}</span>${caret}</div>
        </div>
        <div class="btns">
          <div class="bt" style="width:72px">确定</div>
          <div class="bt" style="width:78px">取消</div>
        </div>
      </div>
    </div>`;
  }

  private renderTree() {
    return TREE.map(r => r.ic
      ? html`<div class="row ${r.last ? 'last' : ''} ${r.sel ? 'sel' : ''}"><div class="lab">${icon(r.ic, 15)}<span style="margin-left:2px">${mix(r.t)}</span></div></div>`
      : html`<div class="row p">
          <svg class="chv" width="10" height="6" viewBox="0 0 10 6"><path d="M1 .5l4 4 4-4" fill="none" stroke="#444" stroke-width="1.300"/></svg>
          ${icon('tfold')}<span style="margin-left:2px">${r.t}</span></div>`);
  }

  private renderTask() {
    const ico = (body: any, cls = '') => html`<div class="tk ${cls}"><svg width="24" height="24" viewBox="0 0 24 24">${body}</svg></div>`;
    return html`<div class="task">
      <div class="start"><svg width="16" height="16" viewBox="0 0 16 16"><path d="M0 2.300l6.500-1v6.300H0zM7.500 1.200L16 0v7.600H7.500zM0 8.500h6.500v6.300l-6.500-1zM7.500 8.500H16V16l-8.500-1.200z" fill="#fff"/></svg></div>
      <div class="search">
        <svg width="22" height="22" viewBox="0 0 22 22"><circle cx="11" cy="11" r="8" fill="none" stroke="#fff" stroke-width="2.400"/></svg>
        <span>在这里输入你要搜索的内容</span>
        <svg width="12" height="20" viewBox="0 0 12 20"><rect x="3.500" y="1" width="5" height="11" rx="2.500" fill="none" stroke="#999"/><path d="M1 9c0 6 10 6 10 0M6 14v4M3 18.500h6" fill="none" stroke="#999"/></svg>
      </div>
      ${ico(svg`<path d="M7 5h10v14H7zM5 7H3v10h2M19 7h2v10h-2" fill="none" stroke="#ddd" stroke-width="1.300"/>`)}
      ${ico(svg`<path d="M12 11C9 2 3 3 2 7s5 5 10 4zM13 11c-1-9 8-10 9-5s-4 6-9 5zM12 13c-9-1-10 8-5 9s6-4 5-9zM13 13c5 9 9 7 9 3s-4-4-9-3z" fill="#ddd"/>`)}
      ${ico(svg`<path d="M12 3a9 9 0 1 0 9 9M12 7a5 5 0 1 0 5 5c0-3-3-3-4-2" fill="none" stroke="#aaa" stroke-width="1.500"/>`)}
      <div style="width:4px;flex:none"></div>
      ${ico(svg`<path d="M3 13C3 6 8 3 13 3c6 0 9 4 9 10H9c0 4 7 5 11 2v5c-6 3-17 2-17-7zm6-3h7c0-4-7-4-7 0z" fill="#0a78d7"/>`)}
      ${ico(svg`<path d="M3 7h18v15H3z" fill="#fff"/><path d="M8 7c0-7 8-7 8 0" fill="none" stroke="#fff" stroke-width="1.500"/><path d="M7 11h4v3.500H7zM12.500 11h4v3.500h-4zM7 15.500h4V19H7zM12.500 15.500h4V19h-4z" fill="#111"/>`)}
      ${ico(svg`<path d="M2 5h8l2 2h10v14H2z" fill="#f4cb5a"/><path d="M2 9h20v12H2z" fill="#fde08a"/><path d="M7 15h10v6H7z" fill="#2d9be0"/>`)}
      ${ico(svg`<circle cx="12" cy="13" r="8" fill="none" stroke="#2a8fe0" stroke-width="3.500"/><path d="M6 13h13" stroke="#2a8fe0" stroke-width="2.500"/><path d="M2 21C3 13 12 4 22 2c-3-.500-12 3-20 19z" fill="#f4c020"/>`)}
      ${ico(svg`<circle cx="12" cy="12" r="10" fill="#7ecb30" stroke="#ddd" stroke-width="1.500"/><path d="M5 12a7 7 0 0 1 14 0zM6 14h12a7 7 0 0 1-12 0z" fill="#fff"/>`, 'run')}
      ${ico(svg`<rect x="1" y="1" width="22" height="22" rx="3" fill="#0f8cf2"/>
        <path d="M12 5v14M5 10h4c2 0 3 1 3 3M19 10h-4c-2 0-3 1-3 3" fill="none" stroke="#fff" stroke-width="2"/><path d="M5 8v5M19 8v5" stroke="#fff" stroke-width="1.500"/>`, 'run cur')}
      ${ico(svg`<path d="M19 3C10 1 3 6 4 14c1 7 9 9 13 5 3-3 2-8-2-8-3 0-5 2-4 4 1-2 3-2 4-1 0 3-5 4-7 0-2-5 4-9 11-6l2-2z" fill="#1a96e8"/>`, 'run')}
      ${ico(svg`<rect x="2" y="2" width="20" height="20" rx="2" fill="#f4a020"/><rect x="5" y="6" width="14" height="13" fill="#fbecc0"/><path d="M7 9h9M7 12h7M7 15h6" stroke="#886"/><path d="M20 3L12 17" stroke="#c83020" stroke-width="2"/>`, 'run')}
      <div class="tray cpu"><span>25%</span><span>CPU使用</span></div>
      <div class="tray" style="width:28px"><svg width="14" height="8" viewBox="0 0 14 8"><path d="M1 7l6-6 6 6" fill="none" stroke="#eee" stroke-width="1.300"/></svg></div>
      <div class="tray" style="width:26px"><svg width="18" height="16" viewBox="0 0 18 16"><path d="M2 5h12v8H2z" fill="none" stroke="#eee"/><path d="M3 6h6v6H3zM15 7h2v4h-2zM3 0h1v5H3zM7 0h1v5H7z" fill="#eee"/></svg></div>
      <div class="tray" style="width:22px"><svg width="16" height="16" viewBox="0 0 16 16"><path d="M1 15A14 14 0 0 1 15 1M5 15A10 10 0 0 1 15 5M9 15a6 6 0 0 1 6-6" fill="none" stroke="#bbb" stroke-dasharray="2 1"/></svg></div>
      <div class="tray" style="width:22px"><svg width="16" height="16" viewBox="0 0 16 16"><path d="M1 6h3l4-4v12l-4-4H1zM10 5c2 2 2 4 0 6M12 3c3 3 3 7 0 10" fill="none" stroke="#eee"/></svg></div>
      <div class="tray" style="width:34px"><svg width="24" height="16" viewBox="0 0 24 16"><rect x=".5" y="1.500" width="23" height="13" fill="none" stroke="#eee"/><path d="M3 5h18M3 8h18" stroke="#eee" stroke-dasharray="2 1"/><path d="M6 11.500h12" stroke="#eee"/></svg></div>
      <div class="tray" style="width:24px;font:bold 14px 'Noto Sans CJK SC',sans-serif">中</div>
      <div class="tray" style="width:32px"><svg width="18" height="18" viewBox="0 0 18 18"><rect x="1" y="1" width="16" height="16" rx="3" fill="#e8481c" transform="rotate(-8 9 9)"/><path d="M13 5H7C5 5 5 8 7 8.500l4 1c2 .5 2 3.500 0 3.500H5" fill="none" stroke="#fff" stroke-width="2.200"/></svg></div>
      <div class="tray clock"><span>21:56</span><span>2017/10/23</span></div>
      <div class="tray" style="width:46px;padding-right:20px;box-sizing:border-box"><svg width="18" height="18" viewBox="0 0 18 18"><path d="M1 2h16v12h-5l-3 3-3-3H1z" fill="none" stroke="#eee" stroke-width="1.200"/></svg></div>
    </div>`;
  }

  render() {
    return html`
      <div class="title">
        <svg width="16" height="16" viewBox="0 0 16 16">${APP}</svg>
        <span class="name">${TITLE}</span>
        <div class="winbtn"><svg width="11" height="1"><path d="M0 .5h11" stroke="#888"/></svg></div>
        <div class="winbtn"><svg width="11" height="11" viewBox="0 0 11 11"><path d="M.5 2.500h8v8h-8zM2.500 2.500v-2h8v8h-2" fill="none" stroke="#888"/></svg></div>
        <div class="winbtn"><svg width="11" height="11" viewBox="0 0 11 11"><path d="M.5 .5l10 10M10.500 .5l-10 10" stroke="#888"/></svg></div>
      </div>

      <div class="menu">
        ${MENU.map(([t, w]) => html`<div class="m" style="width:${w}px">${t}</div>`)}
        <div class="m" style="width:241px">${icon('doc')}新建工程</div>
        <div class="m olive" style="width:102px">定义斜板加..</div>
        <div class="m" style="width:118px">${icon('user')}<span>13907298339</span><span class="tri" style="margin-left:6px"></span></div>
        <div class="m" style="width:61px">造价豆:0</div>
        <div class="m" style="width:46px">${icon('bell')}</div>
        <span class="more">»</span>
      </div>

      <div class="tb1">
        ${this.bar(TB1A, 150, html`<span class="more" style="margin-left:auto;margin-right:3px;margin-top:2px">»</span>`)}
        <div style="width:2px"></div>
        <div class="tbar" style="width:547px;padding-left:4px;box-sizing:border-box;margin-left:1px">${TB1B.map(i => this.renderItem(i))}</div>
        <div style="width:3px"></div>
        <div class="tbar" style="flex:1">${TB1C.map(i => this.renderItem(i))}<span class="more" style="margin-left:auto;margin-right:6px;margin-top:2px">»</span></div>
      </div>

      <div class="main">
        <div class="nav">
          <div class="navhead"><span>模块导航栏</span>
            <svg width="10" height="11" viewBox="0 0 10 11" style="margin-right:10px"><path d="M3 1h4v5H3zM1 6h8M5 6v5" fill="none" stroke="#222"/></svg>
            <svg width="9" height="9" viewBox="0 0 9 9" style="margin-right:4px"><path d="M1 1l7 7M8 1L1 8" stroke="#222"/></svg>
          </div>
          <div style="height:2px;flex:none"></div>
          <div class="nbtn">工程设置</div>
          <div class="nbtn">绘图输入</div>
          <div class="pm">
            <svg width="17" height="16" viewBox="0 0 17 16"><path d="M4 1v8M0 5h8M12 7v8M8 11h8" stroke="#035c5a" stroke-width="2.500"/></svg>
            <svg width="16" height="12" viewBox="0 0 16 12"><path d="M0 2h8M7 9h9" stroke="#035c5a" stroke-width="2.500"/></svg>
          </div>
          <div class="treebox">
            <div class="treetop">
              <div class="rows">${this.renderTree()}</div>
              <div class="vs">
                <div class="ar" style="height:20px"><svg width="9" height="6" viewBox="0 0 9 6"><path d="M.5 5l4-4 4 4" fill="none" stroke="#555" stroke-width="1.500"/></svg></div>
                <div class="t1"></div>
                <div class="th"></div>
                <div style="flex:1"></div>
                <div class="ar" style="height:20px"><svg width="9" height="6" viewBox="0 0 9 6"><path d="M.5 1l4 4 4-4" fill="none" stroke="#555" stroke-width="1.500"/></svg></div>
              </div>
            </div>
            <div class="hs">
              <div class="ar"><svg width="6" height="9" viewBox="0 0 6 9"><path d="M5 .5l-4 4 4 4" fill="none" stroke="#555" stroke-width="1.500"/></svg></div>
              <div class="th"></div>
              <div style="width:5px"></div>
              <div class="ar"><svg width="6" height="9" viewBox="0 0 6 9"><path d="M1 .5l4 4-4 4" fill="none" stroke="#555" stroke-width="1.500"/></svg></div>
            </div>
          </div>
          <div class="nbtn">单构件输入</div>
          <div class="nbtn">报表预览</div>
        </div>

        <div class="right">
          <div class="rowt first">${this.bar(TB2, 789)}</div>
          <div class="rowt">
            ${this.bar(TB3A, 636)}
            ${this.bar(TB3B, 424)}
          </div>
          <div class="rowt r4">
            ${this.bar(TB4, 1158, html`<span class="more" style="margin-left:auto;margin-right:3px;margin-top:2px">»</span>`)}
            <div class="tbar" style="margin-left:9px;width:27px;background:#fdfdfd;height:26px;padding-left:4px;box-sizing:border-box">${this.renderItem(grip(4))}</div>
          </div>
          <div class="canvas">
            ${this.renderCanvas()}
            ${this.renderDialog()}
          </div>
          <div class="rowb">
            ${this.bar(TB5A, 208)}
            ${this.bar(TB5B, 267)}
            <div style="width:1px"></div>
            <div class="tbar" style="flex:1">${TB5C.map(i => this.renderItem(i))}</div>
          </div>
        </div>
      </div>

      <div class="status">
        <div>${mix('X=34529 Y=7085')}</div>
        <div>${mix('层高:2.8m')}</div>
        <div>${mix('底标高:11.97m')}</div>
        <div>${mix('1(3)')}</div>
        <div>按鼠标左键选择需要布筋的板，支持（${mix('Ctrl+')}左键）多选，按右键确定或${mix('ESC')}取消</div>
        <div>${mix('212.4 FPS')}</div>
      </div>

      ${this.renderTask()}

      <!-- network widget and Sogou IME float over the menu row -->
      <div class="widget"></div>
      <div class="ball"></div>
      <svg style="position:absolute;left:962px;top:15px" width="10" height="12" viewBox="0 0 10 12"><path d="M5 0l4 5H6v6H4V5H1z" fill="#d84030"/></svg>
      <div class="speed">0K/s</div>
      <div class="ime">
        <span class="zh">中</span>
        <svg class="imeb" width="16" height="16" viewBox="0 0 16 16"><circle cx="3" cy="4" r="1.800" fill="none" stroke="#1f78d0" stroke-width="1.200"/><path d="M12 8c1 2 0 4-2 6l-1-.6c1-1.500 1-2.500.5-3.400z" fill="#1f78d0"/><circle cx="11" cy="9" r="1.800" fill="#1f78d0"/></svg>
        <svg class="imeb" style="margin-left:6px" width="16" height="18" viewBox="0 0 16 18"><rect x="5" y="0" width="6" height="11" rx="3" fill="#1f78d0"/><path d="M2 7c0 7 12 7 12 0M8 13v4M4 17.500h8" fill="none" stroke="#1f78d0" stroke-width="1.500"/></svg>
        <svg class="imeb" style="margin-left:5px" width="18" height="14" viewBox="0 0 18 14"><rect x=".5" y="1" width="17" height="12" rx="1.500" fill="#1f78d0"/><path d="M3 4h12M3 7h12" stroke="#fff" stroke-dasharray="1.500 1"/><path d="M5 10h8" stroke="#fff"/></svg>
        <svg class="imeb" style="margin-left:5px" width="18" height="16" viewBox="0 0 18 16"><circle cx="6" cy="4" r="3" fill="#b0bcc8"/><path d="M1 14c0-6 3-6 5-6s5 0 5 6z" fill="#b0bcc8"/><rect x="9" y="9" width="9" height="7" fill="#eef1f4" stroke="#b0bcc8"/></svg>
        <svg class="imeb" style="margin-left:4px" width="16" height="16" viewBox="0 0 16 16"><path d="M5 1L0 4l2 3 2-1v9h8V6l2 1 2-3-5-3c-1 2-5 2-6 0z" fill="#1f78d0"/></svg>
        <svg class="imeb" style="margin-left:5px" width="16" height="16" viewBox="0 0 16 16"><path d="M15 4l-3 3-2-1-1-2 3-3c-3-1-6 1-5 4L1 11c-2 2 2 6 4 4l6-6c3 1 5-2 4-5z" fill="#1f78d0"/></svg>
      </div>
      <svg class="s" width="28" height="28" viewBox="0 0 28 28"><rect x="2" y="2" width="24" height="24" rx="5" fill="#e8501c" transform="rotate(-10 14 14)"/><path d="M20 7H11c-3 0-3 5 0 6l6 2c3 1 3 6 0 6H8" fill="none" stroke="#fff" stroke-width="3.600"/></svg>
      <svg class="plus" width="16" height="22" viewBox="0 0 16 22"><circle cx="7" cy="12" r="8" fill="#3a78d0"/><path d="M7 8v8M3 12h8" stroke="#fff" stroke-width="2"/><circle cx="13" cy="4" r="3.500" fill="#d82020"/></svg>

      <!-- hand-drawn red circles -->
      <svg class="marks" width="1366" height="768">
        <g fill="none" stroke="#f00" stroke-width="3.500">
          <ellipse cx="586" cy="155.500" rx="50" ry="37.500"/>
          <ellipse cx="801" cy="148" rx="76" ry="36"/>
          <ellipse cx="877" cy="290" rx="29" ry="35"/>
        </g>
      </svg>
    `;
  }
}
